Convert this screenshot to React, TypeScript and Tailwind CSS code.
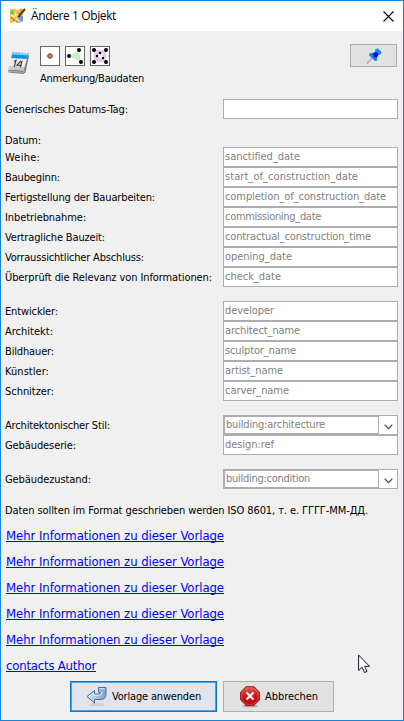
import { useLayoutEffect, useRef } from "react";

type FitProps = { text: string; width: number; className?: string };

/* Text whose letter spacing is adjusted so that it spans the given width. */
function Fit({ text, width, className = "" }: FitProps) {
  const ref = useRef<HTMLSpanElement>(null);
  useLayoutEffect(() => {
    const el = ref.current;
    if (!el) return;
    el.style.letterSpacing = "0px";
    const natural = el.getBoundingClientRect().width;
    el.style.letterSpacing = `${(width - natural) / text.length}px`;
  }, [text, width]);
  return (
    <span ref={ref} className={`inline-block whitespace-pre ${className}`}>
      {text}
    </span>
  );
}

type Row = { label: string; lw: number; value?: string; vw?: number; combo?: boolean };

const dates: Row[] = [
  { label: "Weihe:", lw: 35, value: "sanctified_date", vw: 75 },
  { label: "Baubeginn:", lw: 55, value: "start_of_construction_date", vw: 133 },
  { label: "Fertigstellung der Bauarbeiten:", lw: 150, value: "completion_of_construction_date", vw: 161 },
  { label: "Inbetriebnahme:", lw: 81, value: "commissioning_date", vw: 96 },
  { label: "Vertragliche Bauzeit:", lw: 100, value: "contractual_construction_time", vw: 146 },
  { label: "Vorraussichtlicher Abschluss:", lw: 139, value: "opening_date", vw: 67 },
  { label: "Überprüft die Relevanz von Informationen:", lw: 207, value: "check_date", vw: 56 },
];

const people: Row[] = [
  { label: "Entwickler:", lw: 53, value: "developer", vw: 49 },
  { label: "Architekt:", lw: 48, value: "architect_name", vw: 75 },
  { label: "Bildhauer:", lw: 49, value: "sculptor_name", vw: 71 },
  { label: "Künstler:", lw: 44, value: "artist_name", vw: 58 },
  { label: "Schnitzer:", lw: 49, value: "carver_name", vw: 64 },
];

const style: Row[] = [
  { label: "Architektonischer Stil:", lw: 105, value: "building:architecture", vw: 99, combo: true },
  { label: "Gebäudeserie:", lw: 71, value: "design:ref", vw: 49 },
];

const condition: Row[] = [
  { label: "Gebäudezustand:", lw: 86, value: "building:condition", vw: 84, combo: true },
];

function Field({ row }: { row: Row }) {
  if (row.combo) {
    return (
      <div className="flex h-5 w-[175px] border border-[#abadb3] bg-white">
        <div className="flex h-[18px] w-[155px] border border-[#abadb3] pl-[1px]">
          <Fit text={row.value ?? ""} width={row.vw ?? 0} className="leading-[15px] text-[#808080]" />
        </div>
        <div className="flex flex-1 items-center justify-center pt-[3px]">
          <svg width="9" height="6" viewBox="0 0 9 6" fill="none" stroke="#505050" strokeWidth="1.3">
            <path d="M.7 .8 4.5 4.6 8.3 .8" />
          </svg>
        </div>
      </div>
    );
  }
  return (
    <div className="flex h-5 w-[175px] border border-[#abadb3] bg-white pl-[1px]">
      {row.value ? (
        <Fit text={row.value} width={row.vw ?? 0} className="leading-[17px] text-[#808080]" />
      ) : null}
    </div>
  );
}

function Rows({ rows }: { rows: Row[] }) {
  return (
    <div>
      {rows.map((r) => (
        <div key={r.label} className="flex h-5 items-center justify-between pr-[5px]">
          <div className="flex w-[217px]">
            <Fit text={r.label} width={r.lw} className="pt-[2px] leading-[18px]" />
          </div>
          <Field row={r} />
        </div>
      ))}
    </div>
  );
}

function AppIcon() {
  return (
    <svg width="17" height="16" viewBox="0 0 17 16">
      <path d="M1 2 5 1l4 1 5-1v12l-4 2-4-1-5 1z" fill="#f0c64a" />
      <path d="M1 2 5 1v5l-4 2z" fill="#8fd05a" />
      <path d="M10 8h4v5l-4 2-3-1z" fill="#7596d5" />
      <path d="M2 7l3 2 2-4 3 3-2 3 3 3" fill="none" stroke="#fff0a0" strokeWidth="1.5" />
      <path d="M2 4l2 1M2 10h2M4 12h2" stroke="#d75b39" strokeWidth="1.3" />
      <path d="M8 4l3 3M11 1l3 3" stroke="#d1a36a" strokeWidth="2" />
      <path d="M16 1 10 8" stroke="#6b2710" strokeWidth="2" />
      <path d="M10 7 8 10l3-1" fill="#2f1b12" />
    </svg>
  );
}

function CalendarIcon() {
  return (
    <svg width="22" height="25" viewBox="0 0 22 25">
      <path d="M.3 19.500 15 20 20 5l1 1-3.500 16.500-2.500 1.500L.5 22.500z" fill="#7d7d7d" />
      <path d="M4.500 2.500 20.500 3.500 15.500 20.500 .5 19.500z" fill="#ececec" />
      <path d="M1 16 16.500 17l-1 3.500L.5 19.500z" fill="#c9c9c9" />
      <path d="M4.500 2 20.800 3.200 19.300 9 3.200 8z" fill="#1590de" />
      <path d="M4.500 2 20.800 3.200l-.6 2.200L4 4.400z" fill="#7ccaf3" />
      <path d="M7 1v2.500M10 1.200v2.500M13 1.500V4M16 1.800v2.500M18.500 2v2.500" stroke="#e3f5ff" strokeWidth=".8" />
      <path d="M1 21.300 15 22.300 17 20.500" fill="none" stroke="#c4c4c4" strokeWidth=".8" />
      <path d="m6 11.500 2-1L6.200 17M12.800 11 9 15.200l4.800.2M14 11l-1.800 6.300" fill="none" stroke="#444" strokeWidth="1.200" />
    </svg>
  );
}

function NodeIcon() {
  return (
    <svg width="20" height="20" viewBox="0 0 20 20">
      <rect x=".5" y=".5" width="19" height="19" fill="#fff" stroke="#666" />
      <circle cx="10" cy="10" r="2.300" fill="#ed7777" stroke="#583333" strokeWidth="1" />
    </svg>
  );
}

function WayIcon() {
  return (
    <svg width="20" height="20" viewBox="0 0 20 20">
      <rect x=".5" y=".5" width="19" height="19" fill="#fff" stroke="#666" />
      <path d="M4 10 14 4l2 12z" fill="#ccebcc" />
      <circle cx="4" cy="10" r="2" />
      <circle cx="14" cy="4" r="2" />
      <circle cx="16" cy="16" r="2" />
    </svg>
  );
}

function RelationIcon() {
  return (
    <svg width="20" height="20" viewBox="0 0 20 20">
      <rect x=".5" y=".5" width="19" height="19" fill="#fff" stroke="#666" />
      <path d="M4 4h12v12H4z" fill="#ebc9eb" />
      <path d="m7 10 3-3 4 4-1 2z" fill="#fff" />
      <circle cx="4" cy="4" r="2" />
      <circle cx="16" cy="4" r="2" />
      <circle cx="4" cy="16" r="2" />
      <circle cx="16" cy="16" r="2" />
      <circle cx="10" cy="7" r="1.200" />
      <circle cx="7" cy="10" r="1.200" />
      <circle cx="13" cy="12" r="1.200" />
    </svg>
  );
}

function PinIcon() {
  return (
    <svg width="16" height="16" viewBox="0 0 16 16">
      <path d="M1 15.500 6 10" stroke="#aaa" strokeWidth="1.400" />
      <path d="M3.500 5.500 6 5l3-1 .5-3L12 .5 15.500 4l-.5 2-3 1-1 3 0 2.500-2 .5-6-6z" fill="#087df5" />
      <path d="m7 6 3-2 2.500 2.500-2 3-2.500-.5z" fill="#0505c8" />
      <path d="m10 1 5 4-1 1-5-4z" fill="#1498ff" />
    </svg>
  );
}

function ApplyIcon() {
  return (
    <svg width="22" height="21" viewBox="0 0 22 21">
      <defs>
        <linearGradient id="arrow" x1="0" x2="1">
          <stop offset="0" stopColor="#d3e6f7" />
          <stop offset="1" stopColor="#7fa3c9" />
        </linearGradient>
      </defs>
      <ellipse cx="11" cy="18.500" rx="8" ry="1.800" fill="#cfd2d6" />
      <path
        d="M1 10.500 8.500 4.500v3.500h3.500q2.500 0 2.500-1.800H12.500V1.500H20v6.500q0 5.500-5.500 5.500h-6v3.500z"
        fill="url(#arrow)"
        stroke="#496d96"
        strokeLinejoin="round"
      />
      <path d="m3 10.500 4.500-3.800V9.200h5.500q3 0 3-3.800M13.700 2.700h5" fill="none" stroke="#eff8ff" strokeWidth=".8" />
    </svg>
  );
}

function CancelIcon() {
  return (
    <svg width="20" height="22" viewBox="0 0 20 22">
      <defs>
        <linearGradient id="stop" x1="0" y1="0" x2="0" y2="1">
          <stop offset="0" stopColor="#e25a55" />
          <stop offset=".5" stopColor="#c91414" />
          <stop offset="1" stopColor="#b80000" />
        </linearGradient>
      </defs>
      <ellipse cx="10" cy="20" rx="8" ry="1.500" fill="#aaa" />
      <path d="M6 .8h8L19.300 6v8L14 19.300H6L.7 14V6z" fill="url(#stop)" stroke="#980000" />
      <path d="M6.400 1.900h7.200l4.600 4.500v7.200l-4.600 4.600H6.400l-4.600-4.600V6.400z" fill="none" stroke="#e88480" strokeWidth=".6" />
      <path d="m6.500 6.500 7 7m0-7-7 7" stroke="#f4f4f4" strokeWidth="2.300" />
    </svg>
  );
}

const links = [1, 2, 3, 4, 5];

export default function App() {
  return (
    <div className="relative flex h-[721px] w-[404px] flex-col border border-[#1883d7] bg-[#f0f0f0] font-['DejaVu_Sans_Condensed','DejaVu_Sans',sans-serif] text-[11px] leading-[14px] text-black [font-stretch:condensed]">
      <header className="flex h-[30px] items-center justify-between bg-white pl-2 pr-[9px]">
        <div className="flex items-center gap-[5px]">
          <AppIcon />
          <Fit
            text="Ändere 1 Objekt"
            width={85}
            className="font-['Open_Sans',sans-serif] text-[12px] leading-[18px] [font-stretch:normal]"
          />
        </div>
        <svg width="11" height="11" viewBox="0 0 11 11" stroke="#000" strokeWidth="1.100">
          <path d="m.5 .5 10 10m0-10-10 10" />
        </svg>
      </header>

      <section className="flex h-[68px] pl-[7px] pr-[6px] pt-[13px]">
        <div className="w-8 pt-[6px]">
          <CalendarIcon />
        </div>
        <div className="flex flex-1 flex-col pt-[2px]">
          <div className="flex gap-[5px]">
            <NodeIcon />
            <WayIcon />
            <RelationIcon />
          </div>
          <Fit text="Anmerkung/Baudaten" width={104} className="mt-[6px] self-start" />
        </div>
        <button className="flex h-[23px] w-[47px] items-center justify-center border border-[#adadad] bg-[#e1e1e1]">
          <PinIcon />
        </button>
      </section>

      <main className="flex flex-col pl-1">
        <Rows rows={[{ label: "Generisches Datums-Tag:", lw: 123 }]} />
        <div className="mt-[14px] flex h-[14px]">
          <Fit text="Datum:" width={36} className="pt-px" />
        </div>
        <Rows rows={dates} />
        <div className="mt-[14px]">
          <Rows rows={people} />
        </div>
        <div className="mt-[14px]">
          <Rows rows={style} />
        </div>
        <div className="mt-[14px]">
          <Rows rows={condition} />
        </div>
        <div className="mt-[14px] flex h-[20px]">
          <Fit
            text="Daten sollten im Format geschrieben werden ISO 8601, т. е. ГГГГ-ММ-ДД."
            width={363}
            className="pt-px"
          />
        </div>
        <nav className="flex flex-col items-start pl-[1px] text-[13px] text-[#0000ff]">
          {links.map((n) => (
            <a key={n} className="flex h-[26px] items-start pt-1">
              <Fit
                text="Mehr Informationen zu dieser Vorlage"
                width={218}
                className="h-[15px] border-b border-[#0000ff] leading-[18px]"
              />
            </a>
          ))}
          <a className="flex h-[26px] items-start pt-1">
            <Fit text="contacts Author" width={90} className="h-[15px] border-b border-[#0000ff] leading-[18px]" />
          </a>
        </nav>
      </main>

      <footer className="mt-[2px] flex gap-[6px] pl-[69px]">
        <button className="flex h-[31px] w-[147px] items-center border border-[#0078d7] bg-[#e1e4ea] pl-[15px] shadow-[inset_0_0_0_1px_#4ca0e0]">
          <ApplyIcon />
          <Fit text="Vorlage anwenden" width={89} className="ml-[4px]" />
        </button>
        <button className="flex h-[31px] w-[111px] items-center border border-[#adadad] bg-[#e1e1e1] pl-[16px]">
          <CancelIcon />
          <Fit text="Abbrechen" width={53} className="ml-[5px]" />
        </button>
      </footer>

      <svg className="absolute left-[357px] top-[653px]" width="13" height="20" viewBox="0 0 13 20">
        <path d="M.6 1v15.500l3.600-3.300 2.300 5.300 2.500-1-2.300-5.200h4.800z" fill="#fff" stroke="#111522" strokeWidth="1" />
      </svg>
    </div>
  );
}
